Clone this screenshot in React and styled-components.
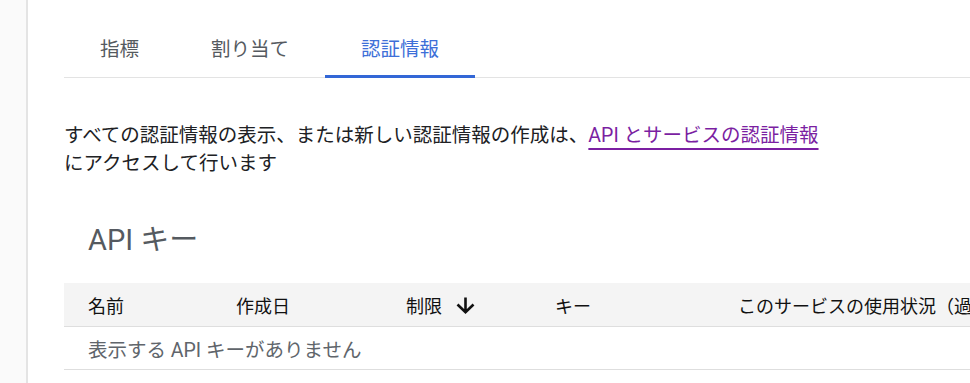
import React from "react";
import styled, { createGlobalStyle } from "styled-components";

const GlobalStyle = createGlobalStyle`
    html, body {
        margin: 0;
        padding: 0;
        background: #fff;
        overflow: hidden;
    }
    body {
        font-family: Roboto, "Noto Sans CJK JP", sans-serif;
        color: #202124;
    }
`;

const tabs = ["指標", "割り当て", "認証情報"];

const columns = [
    { label: "名前" },
    { label: "作成日" },
    { label: "制限", sorted: true },
    { label: "キー" },
    { label: "このサービスの使用状況（過去 30 日間）" },
];

const SortArrow = () => (
    <svg width="19" height="17" viewBox="0 0 19 17" aria-hidden="true">
        <path
            d="M9.5 0.5V15M1.5 7.5L9.5 15.2L17.5 7.5"
            fill="none"
            stroke="#111"
            strokeWidth="2.6"
        />
    </svg>
);

const App = () => {
    return (
        <Page>
            <GlobalStyle />
            <Sidebar />
            <Main>
                <TabBar>
                    {tabs.map((t, i) => (
                        <Tab key={t} $active={i === 2}>
                            {t}
                        </Tab>
                    ))}
                </TabBar>
                <Intro>
                    すべての認証情報の表示、または新しい認証情報の作成は、
                    <Link href="#">API とサービスの認証情報</Link>
                    にアクセスして行います
                </Intro>
                <Heading>API キー</Heading>
                <Table>
                    <HeaderRow>
                        {columns.map((c) => (
                            <HeaderCell key={c.label}>
                                {c.label}
                                {c.sorted && (
                                    <ArrowBox>
                                        <SortArrow />
                                    </ArrowBox>
                                )}
                            </HeaderCell>
                        ))}
                    </HeaderRow>
                    <EmptyRow>表示する API キーがありません</EmptyRow>
                </Table>
            </Main>
        </Page>
    );
};

export default App;

const Page = styled.div`
    display: flex;
    width: 970px;
    height: 383px;
    overflow: hidden;
`;

const Sidebar = styled.div`
    width: 26px;
    flex-shrink: 0;
    background: #fafafa;
    border-right: 2px solid #e4e4e4;
`;

const Main = styled.div`
    flex: 1;
    min-width: 0;
    padding-left: 36px;
`;

const TabBar = styled.div`
    display: flex;
    margin-top: 26px;
    border-bottom: 1px solid #e3e3e3;
`;

const Tab = styled.div`
    padding: 12px 36px 13px;
    margin-bottom: -1px;
    font-size: 19.5px;
    line-height: 24px;
    color: ${(p) => (p.$active ? "#3d6fd8" : "#555a60")};
    border-bottom: 3px solid ${(p) => (p.$active ? "#3367d6" : "transparent")};
`;

const Intro = styled.p`
    margin: 44px 0 0;
    max-width: 770px;
    font-size: 19.5px;
    line-height: 28px;
    color: #202124;
`;

const Link = styled.a`
    color: #7b1fa2;
    white-space: nowrap;
    text-decoration: underline;
    text-decoration-thickness: 2px;
    text-underline-offset: 6px;
`;

const Heading = styled.h2`
    margin: 44px 0 0;
    padding-left: 24px;
    font-size: 29px;
    font-weight: 400;
    line-height: 36px;
    color: #555a60;
`;

const Table = styled.div`
    margin-top: 25px;
`;

const HeaderRow = styled.div`
    display: grid;
    grid-template-columns: 148px 170px 149px 183px 1fr;
    height: 43px;
    background: #f4f4f4;
    border-bottom: 1px solid #dedede;
`;

const HeaderCell = styled.div`
    display: flex;
    align-items: center;
    padding-left: 24px;
    font-size: 18px;
    color: #111;
    white-space: nowrap;
    overflow: hidden;
`;

const ArrowBox = styled.span`
    display: inline-flex;
    margin-left: 14px;
    margin-top: 2px;
`;

const EmptyRow = styled.div`
    display: flex;
    align-items: center;
    height: 42px;
    padding-left: 24px;
    font-size: 19.5px;
    color: #60656b;
    border-bottom: 1px solid #dedede;
`;
